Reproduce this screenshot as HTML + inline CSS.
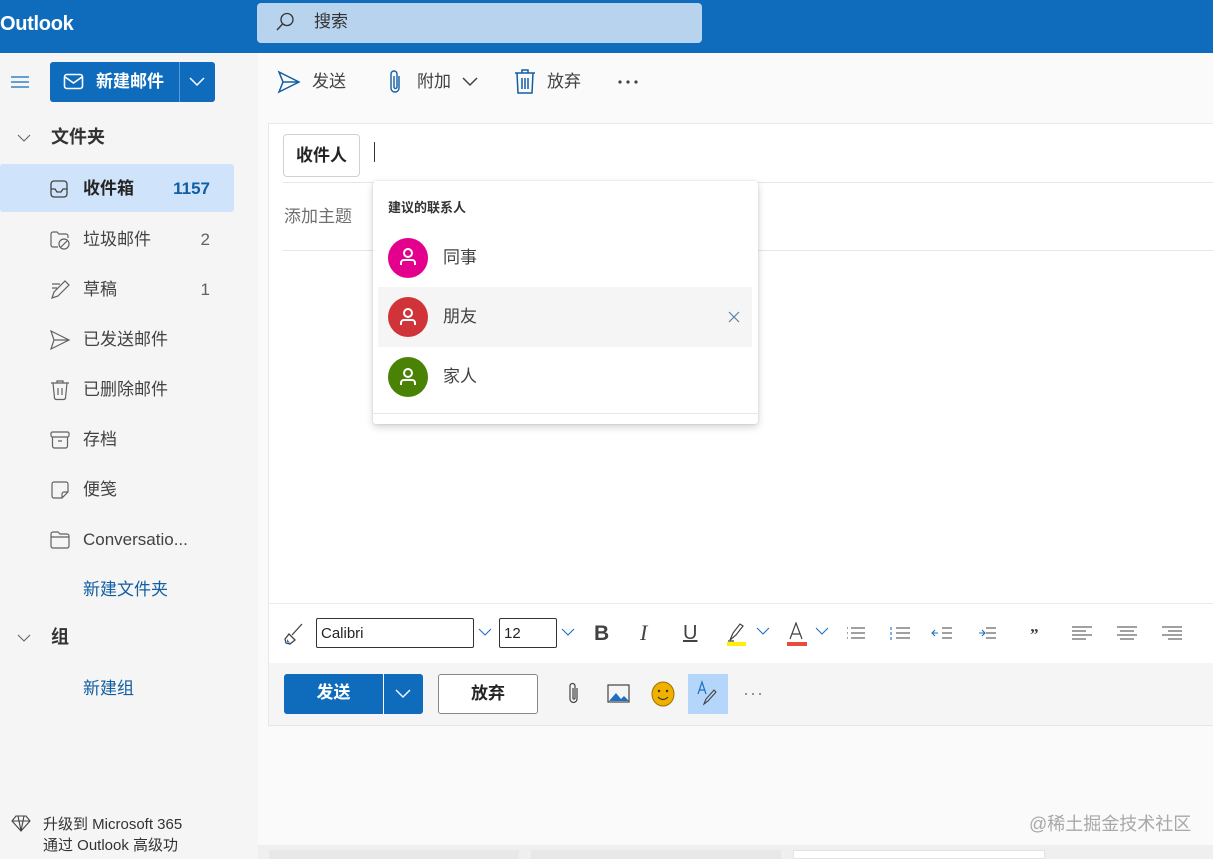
<!DOCTYPE html>
<html><head><meta charset="utf-8"><style>
*{box-sizing:border-box;margin:0;padding:0}
body{width:1213px;height:859px;overflow:hidden;position:relative;background:#f5f5f5;font-family:"Liberation Sans","Noto Sans CJK SC",sans-serif;color:#242424;line-height:1.2}
.a{position:absolute}
.hdr{left:0;top:0;width:1213px;height:53px;background:#0f6cbd}
.side .it{position:absolute;left:0;width:234px;height:48px;font-size:17px;color:#424242}
.side .it span.t{position:absolute;left:83px;top:15px}
.side .it span.n{position:absolute;right:24px;top:15px;color:#616161}
.side svg{position:absolute;left:49px;top:14px}
.tb{font-size:17px;color:#424242}
.row{position:absolute;left:5px;width:374px;height:60px}
.av{position:absolute;left:10px;top:10px;width:40px;height:40px;border-radius:50%}
.row .nm{position:absolute;left:65px;top:20px;font-size:17px;color:#424242}
.fi{position:absolute;top:622px;font-size:18px;color:#424242}
</style></head><body>
<div class="a hdr"></div>
<div class="a" style="left:0;top:12px;color:#fff;font-size:20px;font-weight:bold;letter-spacing:-0.3px">Outlook</div>
<div class="a" style="left:257px;top:3px;width:445px;height:40px;background:#b7d3ee;border-radius:4px"></div>
<svg class="a" style="left:274px;top:11px" width="22" height="22" viewBox="0 0 22 22"><circle cx="13" cy="8.5" r="6" fill="none" stroke="#333" stroke-width="1.3"/><path d="M8.7 12.8L3 19" stroke="#333" stroke-width="1.4"/></svg>
<div class="a" style="left:314px;top:12px;font-size:17px;color:#333">搜索</div>

<div class="a" style="left:258px;top:53px;width:955px;height:806px;background:#fafafa"></div>

<svg class="a" style="left:10px;top:74px" width="20" height="16"><path d="M1 3h18M1 8h18M1 13h18" stroke="#0f6cbd" stroke-width="1.3"/></svg>
<div class="a" style="left:50px;top:62px;width:165px;height:40px;background:#0f6cbd;border-radius:3px"></div>
<div class="a" style="left:179px;top:62px;width:1px;height:40px;background:#5b9bd5"></div>
<svg class="a" style="left:63px;top:73px" width="22" height="18"><rect x="1.5" y="1.5" width="18" height="14" rx="2.5" fill="none" stroke="#fff" stroke-width="1.6"/><path d="M2 4l8.5 6L19 4" fill="none" stroke="#fff" stroke-width="1.6"/></svg>
<div class="a" style="left:96px;top:72px;color:#fff;font-size:17px;font-weight:bold">新建邮件</div>
<svg class="a" style="left:188px;top:75px" width="18" height="14"><path d="M2 3l7 7 7-7" fill="none" stroke="#fff" stroke-width="1.5"/></svg>

<svg class="a" style="left:17px;top:133px" width="14" height="10"><path d="M1 2l6 6 6-6" fill="none" stroke="#666" stroke-width="1.1"/></svg>
<div class="a" style="left:51px;top:127px;font-size:18px;font-weight:bold;color:#333">文件夹</div>
<div class="side">
<div class="it" style="top:164px;background:#cfe4fa;border-radius:3px"><svg width="20" height="20" style="top:15px"><rect x="2" y="2" width="16" height="16" rx="3" fill="none" stroke="#424242" stroke-width="1.3"/><path d="M2 10h4l2 3h4l2-3h4" fill="none" stroke="#424242" stroke-width="1.3"/></svg><span class="t" style="font-weight:bold;color:#242424">收件箱</span><span class="n" style="font-weight:bold;color:#115ea3;right:24px">1157</span></div>
<div class="it" style="top:215px"><svg width="22" height="22"><path d="M2 5a2 2 0 012-2h4l2 2h7a2 2 0 012 2v2M9 18H4a2 2 0 01-2-2V5" fill="none" stroke="#616161" stroke-width="1.2"/><circle cx="15" cy="15" r="5" fill="none" stroke="#616161" stroke-width="1.2"/><path d="M12 18l6-6" stroke="#616161" stroke-width="1.2"/></svg><span class="t">垃圾邮件</span><span class="n">2</span></div>
<div class="it" style="top:265px"><svg width="22" height="22"><path d="M3 5h8M3 9h5M3 19l2-6L16 2l4 4L9 17z" fill="none" stroke="#616161" stroke-width="1.2"/></svg><span class="t">草稿</span><span class="n">1</span></div>
<div class="it" style="top:315px"><svg width="22" height="22"><path d="M2 2l18 9-18 9 3-9zM5 11h15" fill="none" stroke="#616161" stroke-width="1.2"/></svg><span class="t">已发送邮件</span></div>
<div class="it" style="top:365px"><svg width="22" height="22"><path d="M2 4h18M8 4V2h6v2M4 4l1.5 15a2 2 0 002 1.5h7a2 2 0 002-1.5L18 4M9 9v7M13 9v7" fill="none" stroke="#616161" stroke-width="1.2"/></svg><span class="t">已删除邮件</span></div>
<div class="it" style="top:415px"><svg width="22" height="22"><rect x="2" y="3" width="18" height="5" rx="1.5" fill="none" stroke="#616161" stroke-width="1.2"/><path d="M3.5 8v9a2 2 0 002 2h11a2 2 0 002-2V8M9 12h4" fill="none" stroke="#616161" stroke-width="1.2"/></svg><span class="t">存档</span></div>
<div class="it" style="top:465px"><svg width="22" height="22"><path d="M13 19H5a2 2 0 01-2-2V5a2 2 0 012-2h12a2 2 0 012 2v8zM13 19v-4a2 2 0 012-2h4" fill="none" stroke="#616161" stroke-width="1.2"/></svg><span class="t">便笺</span></div>
<div class="it" style="top:515px"><svg width="22" height="22"><path d="M2 5a2 2 0 012-2h5l2 2h7a2 2 0 012 2v10a2 2 0 01-2 2H4a2 2 0 01-2-2zM2 8h18" fill="none" stroke="#616161" stroke-width="1.2"/></svg><span class="t">Conversatio...</span></div>
<div class="it" style="top:565px"><span class="t" style="color:#115ea3">新建文件夹</span></div>
</div>
<svg class="a" style="left:17px;top:633px" width="14" height="10"><path d="M1 2l6 6 6-6" fill="none" stroke="#666" stroke-width="1.1"/></svg>
<div class="a" style="left:51px;top:627px;font-size:18px;font-weight:bold;color:#333">组</div>
<div class="a" style="left:83px;top:679px;font-size:17px;color:#115ea3">新建组</div>
<svg class="a" style="left:11px;top:814px" width="20" height="18"><path d="M5 2h10l4 5-9 10L1 7zM1 7h18M7 2l3 15 3-15" fill="none" stroke="#424242" stroke-width="1.1"/></svg>
<div class="a" style="left:43px;top:814px;font-size:15px;color:#333;line-height:21px">升级到 Microsoft 365<br>通过 Outlook 高级功</div>

<svg class="a" style="left:277px;top:70px" width="24" height="24"><path d="M2 2l20 10L2 22l4-10zM6 12h16" fill="none" stroke="#115ea3" stroke-width="1.5"/></svg>
<div class="a tb" style="left:312px;top:72px">发送</div>
<svg class="a" style="left:387px;top:68px" width="16" height="28"><path d="M12 8v12a4 4 0 01-8 0V6a3 3 0 016 0v13a1.5 1.5 0 01-3 0V8" fill="none" stroke="#115ea3" stroke-width="1.4"/></svg>
<div class="a tb" style="left:417px;top:72px">附加</div>
<svg class="a" style="left:461px;top:76px" width="18" height="12"><path d="M2 2l7 7 7-7" fill="none" stroke="#424242" stroke-width="1.5"/></svg>
<svg class="a" style="left:513px;top:68px" width="24" height="28"><path d="M2 5h20M9 5V2h6v3M4 5l1 20h14l1-20M9 10v11M12 10v11M15 10v11" fill="none" stroke="#115ea3" stroke-width="1.5"/></svg>
<div class="a tb" style="left:547px;top:72px">放弃</div>
<svg class="a" style="left:617px;top:79px" width="22" height="6"><circle cx="3" cy="3" r="1.6" fill="#424242"/><circle cx="11" cy="3" r="1.6" fill="#424242"/><circle cx="19" cy="3" r="1.6" fill="#424242"/></svg>

<div class="a" style="left:268px;top:123px;width:945px;height:603px;background:#fff;border-left:1px solid #e8e8e8;border-top:1px solid #e8e8e8"></div>
<div class="a" style="left:283px;top:134px;width:77px;height:43px;border:1px solid #d1d1d1;border-radius:4px;font-size:17px;font-weight:bold;text-align:center;line-height:41px">收件人</div>
<div class="a" style="left:374px;top:142px;width:1px;height:20px;background:#333"></div>
<div class="a" style="left:283px;top:182px;width:930px;height:1px;background:#e6e6e6"></div>
<div class="a" style="left:284px;top:207px;font-size:17px;color:#707070">添加主题</div>
<div class="a" style="left:283px;top:250px;width:930px;height:1px;background:#e6e6e6"></div>

<div class="a" style="left:269px;top:603px;width:944px;height:1px;background:#ebebeb"></div>
<svg class="a" style="left:283px;top:622px" width="22" height="24"><path d="M19 2L9 13M6 12l6 6-5 4-4-1-1-4z" fill="none" stroke="#424242" stroke-width="1.3"/><path d="M4 17l3 4-3-1z" fill="#1e6fc2"/></svg>
<div class="a" style="left:316px;top:618px;width:158px;height:30px;border:1px solid #333;border-radius:2px;font-size:15px;padding:6px 4px">Calibri</div>
<svg class="a" style="left:477px;top:627px" width="16" height="10"><path d="M2 2l6 6 6-6" fill="none" stroke="#1e6fc2" stroke-width="1.1"/></svg>
<div class="a" style="left:499px;top:618px;width:58px;height:30px;border:1px solid #333;border-radius:2px;font-size:15px;padding:6px 4px">12</div>
<svg class="a" style="left:560px;top:627px" width="16" height="10"><path d="M2 2l6 6 6-6" fill="none" stroke="#1e6fc2" stroke-width="1.1"/></svg>
<div class="fi" style="left:594px;font-weight:bold;font-size:21px;top:621px">B</div>
<div class="fi" style="left:640px;font-style:italic;font-family:'Liberation Serif',serif;font-size:22px;top:620px">I</div>
<div class="fi" style="left:683px;text-decoration:underline;font-size:20px;top:621px">U</div>
<svg class="a" style="left:726px;top:622px" width="50" height="24"><path d="M4 18l3-7 7-9 3 2-7 9zM2 19h6" fill="none" stroke="#424242" stroke-width="1.2"/><rect x="1" y="20" width="19" height="4" fill="#fff100"/><path d="M31 6l6 6 6-6" fill="none" stroke="#1e6fc2" stroke-width="1.1"/></svg>
<svg class="a" style="left:786px;top:622px" width="50" height="24"><path d="M4 17l6-16 6 16M6 12h8" fill="none" stroke="#424242" stroke-width="1.2"/><rect x="1" y="20" width="20" height="4" fill="#e74c3c"/><path d="M30 6l6 6 6-6" fill="none" stroke="#1e6fc2" stroke-width="1.1"/></svg>
<svg class="a" style="left:846px;top:625px" width="360" height="18"><g stroke="#424242" stroke-width="1.1" fill="none"><path d="M1 3h1M5 3h14M1 8h1M5 8h14M1 13h1M5 13h14"/><path d="M50 3h14M50 8h14M50 13h14"/><path d="M45 2v3M45 7v3M45 12v3" stroke="#1e6fc2"/><path d="M96 3h10M96 8h10M96 13h10"/><path d="M89 5l-3 3 3 3M86 8h6" stroke="#1e6fc2"/><path d="M140 3h10M140 8h10M140 13h10"/><path d="M133 8h6M136 5l3 3-3 3" stroke="#1e6fc2"/><path d="M226 2h20M226 6h14M226 10h20M226 14h14"/><path d="M271 2h20M274 6h14M271 10h20M274 14h14"/><path d="M316 2h20M322 6h14M316 10h20M322 14h14"/></g><text x="184" y="15" font-size="17" font-weight="bold" fill="#424242" font-family="Liberation Serif">”</text></svg>

<div class="a" style="left:269px;top:663px;width:944px;height:63px;background:#f5f5f5;border-bottom:1px solid #e6e6e6"></div>
<div class="a" style="left:284px;top:674px;width:139px;height:40px;background:#0f6cbd;border-radius:3px"></div>
<div class="a" style="left:383px;top:674px;width:1px;height:40px;background:#fff"></div>
<div class="a" style="left:284px;top:683px;width:99px;text-align:center;color:#fff;font-weight:bold;font-size:17px">发送</div>
<svg class="a" style="left:394px;top:688px" width="18" height="12"><path d="M2 2l7 7 7-7" fill="none" stroke="#fff" stroke-width="1.4"/></svg>
<div class="a" style="left:438px;top:674px;width:100px;height:40px;background:#fff;border:1px solid #8a8886;border-radius:3px;text-align:center;line-height:38px;font-size:17px;font-weight:bold">放弃</div>
<svg class="a" style="left:566px;top:681px" width="16" height="26"><path d="M11 7v11a3.5 3.5 0 01-7 0V5a2.5 2.5 0 015 0v12a1 1 0 01-2 0V7" fill="none" stroke="#424242" stroke-width="1.2"/></svg>
<svg class="a" style="left:607px;top:684px" width="24" height="20"><rect x="1" y="1" width="21" height="17" fill="none" stroke="#424242" stroke-width="1.2"/><path d="M2 17l7-8 5 6 3-3 5 5z" fill="#1e6fc2"/></svg>
<svg class="a" style="left:651px;top:681px" width="24" height="26"><ellipse cx="12" cy="13" rx="11" ry="12" fill="#f0b000" stroke="#a07000"/><circle cx="8" cy="10" r="1.2" fill="#333"/><circle cx="16" cy="10" r="1.2" fill="#333"/><path d="M7 16q5 5 10 0" fill="none" stroke="#333" stroke-width="1.2"/></svg>
<div class="a" style="left:688px;top:674px;width:40px;height:40px;background:#b4d6fa"></div>
<svg class="a" style="left:695px;top:680px" width="26" height="28"><path d="M3 14l4-12 4 12M4.5 10h5" fill="none" stroke="#1e6fc2" stroke-width="1.2"/><path d="M9 24l2-5 8-9 2 2-8 9z" fill="none" stroke="#424242" stroke-width="1.1"/></svg>
<svg class="a" style="left:744px;top:692px" width="20" height="4"><circle cx="2" cy="2" r="1" fill="#777"/><circle cx="9" cy="2" r="1" fill="#777"/><circle cx="16" cy="2" r="1" fill="#777"/></svg>

<div class="a" style="left:258px;top:845px;width:955px;height:14px;background:#efefef"></div>
<div class="a" style="left:269px;top:850px;width:250px;height:9px;background:#e8e8e8"></div>
<div class="a" style="left:531px;top:850px;width:250px;height:9px;background:#e8e8e8"></div>
<div class="a" style="left:793px;top:850px;width:252px;height:9px;background:#fff;border:1px solid #e3e3e3"></div>
<div class="a" style="left:1029px;top:814px;font-size:18px;color:#a8a8a8">@稀土掘金技术社区</div>

<div class="a" style="left:373px;top:181px;width:385px;height:243px;background:#fff;border-radius:3px;box-shadow:0 3px 8px rgba(0,0,0,.18),0 0 2px rgba(0,0,0,.12)">
 <div class="a" style="left:15px;top:19px;font-size:13px;font-weight:bold;color:#333">建议的联系人</div>
 <div class="row" style="top:47px"><div class="av" style="background:#e3008c"></div><div class="nm">同事</div></div>
 <div class="row" style="top:106px;background:#f5f5f5"><div class="av" style="background:#d13438"></div><div class="nm">朋友</div><svg class="a" style="left:350px;top:24px" width="12" height="12"><path d="M1 1l10 10M11 1L1 11" stroke="#5a7fa0" stroke-width="1.2"/></svg></div>
 <div class="row" style="top:166px"><div class="av" style="background:#498205"></div><div class="nm">家人</div></div>
 <div class="a" style="left:0;top:232px;width:385px;height:1px;background:#e6e6e6"></div>
</div>
<svg class="a" style="left:396px;top:245px" width="24" height="160"><g fill="none" stroke="#fff" stroke-width="2"><circle cx="12" cy="8" r="4"/><path d="M5 20v-2a3 3 0 013-3h8a3 3 0 013 3v2"/><circle cx="12" cy="68" r="4"/><path d="M5 80v-2a3 3 0 013-3h8a3 3 0 013 3v2"/><circle cx="12" cy="128" r="4"/><path d="M5 140v-2a3 3 0 013-3h8a3 3 0 013 3v2"/></g></svg>
</body></html>
